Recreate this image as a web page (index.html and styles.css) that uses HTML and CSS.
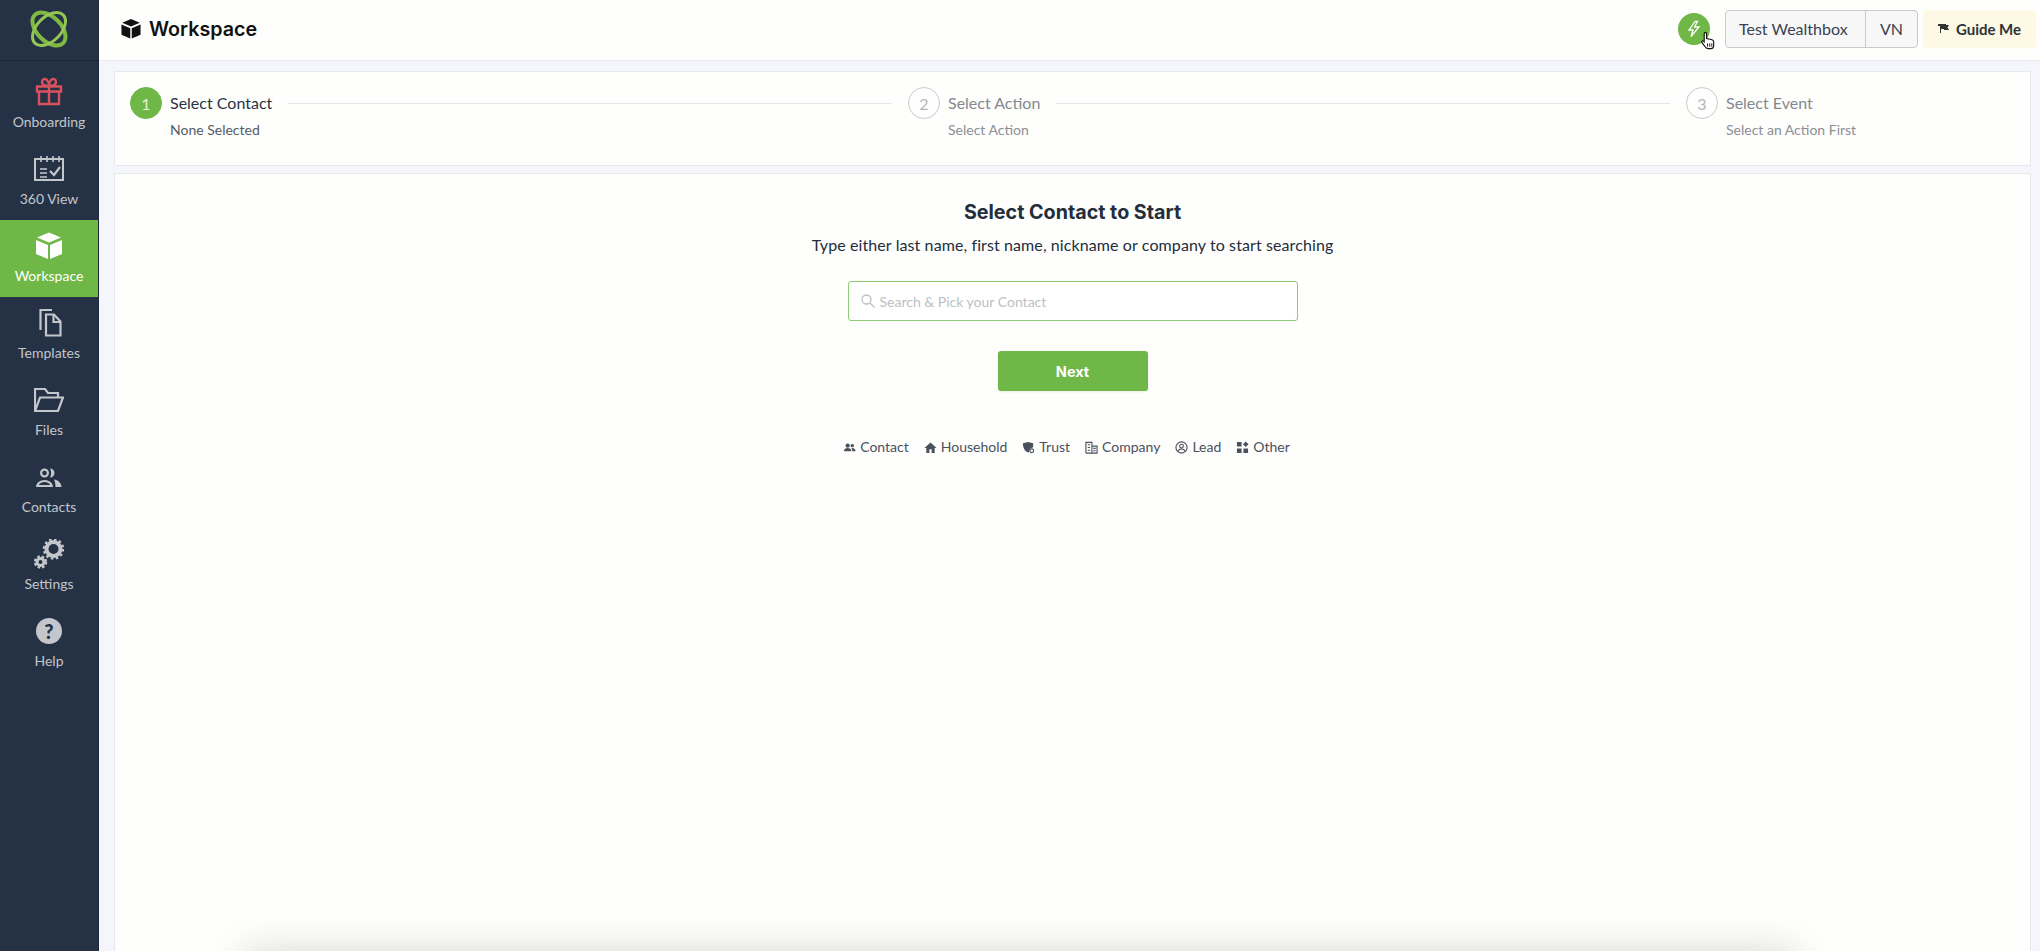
FILE: index.html
```html
<!DOCTYPE html>
<html lang="en">
<head>
  <meta charset="UTF-8" />
  <meta name="viewport" content="width=device-width, initial-scale=1.0" />
  <title>Workspace</title>
  <link rel="stylesheet" href="styles.css">
</head>
<body>
  <div class="app">
    <!-- sidebar -->
    <aside class="sidebar">
      <div class="logo">
        <svg width="38" height="38" viewBox="0 0 38 38" fill="none" stroke="#7fb843" stroke-width="4">
          <ellipse cx="19" cy="19" rx="20" ry="12" transform="rotate(45 19 19)"/>
          <ellipse cx="19" cy="19" rx="20" ry="12" transform="rotate(-45 19 19)" stroke="#93c653" stroke-width="3"/>
        </svg>
      </div>
      <nav>
        <a class="nav-item">
          <svg class="nav-icon" viewBox="0 0 30 30" fill="none" stroke="#d9515f" stroke-width="2.400">
            <path d="M3 9.500h24v5H3zM5 14.500V27h20V14.500M15 9.500V27"/>
            <path d="M15 9c-3 0-7-1-7-4s3-4 5-2 2 6 2 6zM15 9c3 0 7-1 7-4s-3-4-5-2-2 6-2 6z"/>
          </svg>
          <span>Onboarding</span>
        </a>
        <a class="nav-item">
          <svg class="nav-icon" viewBox="0 0 30 30" fill="none" stroke="#c3c6cb" stroke-width="2">
            <path d="M1 5h28v21H1z"/>
            <path d="M7 2v6M13 2v6M19 2v6M25 2v6" stroke-width="1.600"/>
            <path d="M6 15h7M6 19h7M6 23h7" stroke-width="1.700"/>
            <path d="M16 17l4 4 6-8" stroke-width="2.200"/>
          </svg>
          <span>360 View</span>
        </a>
        <a class="nav-item active">
          <svg class="nav-icon" viewBox="0 0 30 30" fill="#fff">
            <path d="M15 1.500l12 5-12 5-12-5z"/>
            <path d="M2 9l12 5v14L2 23z"/>
            <path d="M28 9l-12 5v14l12-5z"/>
          </svg>
          <span>Workspace</span>
        </a>
        <a class="nav-item">
          <svg class="nav-icon" viewBox="0 0 30 30" fill="none" stroke="#c3c6cb" stroke-width="2.200">
            <path d="M12 6.500h8l6.500 7V27.500H12z"/>
            <path d="M19.500 6.500v7.500h7"/>
            <path d="M18 2H6.500v20"/>
          </svg>
          <span>Templates</span>
        </a>
        <a class="nav-item">
          <svg class="nav-icon" viewBox="0 0 30 30" fill="none" stroke="#c3c6cb" stroke-width="2.200">
            <path d="M1 26V4h10l3 4h10v4"/>
            <path d="M1 26h23l5-13.500H6z"/>
          </svg>
          <span>Files</span>
        </a>
        <a class="nav-item">
          <svg class="nav-icon" viewBox="0 0 30 30" fill="#c3c6cb">
            <path fill-rule="evenodd" d="M10.500 6.500a4.500 4.500 0 1 1 0 9 4.500 4.500 0 0 1 0-9zm0 2.200a2.300 2.300 0 1 0 0 4.600 2.300 2.300 0 0 0 0-4.600z"/>
            <path d="M16 6.500a4.500 4.500 0 0 1 0 9c1.500-2.500 1.500-6.500 0-9z"/>
            <path fill-rule="evenodd" d="M2 25c0-4 4-7 8.500-7s8.500 3 8.500 7zm2.800-2h11.400c-1-1.800-3.500-3-5.700-3s-4.700 1.200-5.700 3z"/>
            <path d="M20 17.500c4 .5 7.500 3.500 7.500 7.500h-6c0-3-.5-5.500-1.500-7.500z"/>
          </svg>
          <span>Contacts</span>
        </a>
        <a class="nav-item">
          <svg class="nav-icon" viewBox="0 0 30 30" fill="none" stroke="#c3c6cb">
            <circle cx="19.500" cy="10" r="7" stroke-width="4"/>
            <circle cx="19.500" cy="10" r="9.500" stroke-width="2.500" stroke-dasharray="2.500 2.500"/>
            <circle cx="6.500" cy="23" r="3.500" stroke-width="3"/>
            <circle cx="6.500" cy="23" r="5.500" stroke-width="2.500" stroke-dasharray="2.500 1.900"/>
          </svg>
          <span>Settings</span>
        </a>
        <a class="nav-item">
          <div class="help-icon">?</div>
          <span>Help</span>
        </a>
      </nav>
    </aside>

    <div class="main">
      <!-- top bar -->
      <header class="topbar">
        <div class="page-title">
          <svg width="22" height="22" viewBox="0 0 30 30" fill="#111">
            <path d="M15 1.500l12 5-12 5-12-5z"/>
            <path d="M2 9l12 5v14L2 23z"/>
            <path d="M28 9l-12 5v14l12-5z"/>
          </svg>
          Workspace
        </div>
        <div class="top-actions">
          <div class="bolt">
            <svg width="16" height="18" viewBox="0 0 16 18" fill="none" stroke="#fff" stroke-width="1.300">
              <path d="M9 1.500L3 10h4l-2 6.500L13 7H8.500l3-5.500z"/>
            </svg>
            <svg class="cursor" width="16" height="19" viewBox="0 0 16 20">
              <path d="M5 1.500c1 0 1.500.6 1.500 1.500v5l5 1c1.500.4 2.500 1 2.500 2.500V15c0 2-1 3.500-3 3.500H8c-1.500 0-2.500-1-3.500-2.500L1.500 12c-.7-1 .6-2.300 1.700-1.300l.8.800V3c0-1 .5-1.500 1-1.500z" fill="#fff" stroke="#111" stroke-width="1.200"/>
              <path d="M7.500 13v3.500M9.800 13v3.500M12 13v3.500" stroke="#111" stroke-width="1"/>
            </svg>
          </div>
          <div class="account">
            <span class="account-name">Test Wealthbox</span>
            <span class="account-initials">VN</span>
          </div>
          <div class="guide">
            <svg width="12" height="11" viewBox="0 0 12 11" fill="#333"><path d="M0 1h8v1h3L9.500 4.500 11 7H6V6H3v4H2V3H0z"/></svg>
            Guide Me
          </div>
        </div>
      </header>

      <div class="page-body">
        <!-- stepper -->
        <section class="steps-card">
          <div class="step current">
            <div class="step-row">
              <div class="step-num">1</div>
              <div class="step-label">Select Contact</div>
              <div class="step-line"></div>
            </div>
            <div class="step-sub">None Selected</div>
          </div>
          <div class="step">
            <div class="step-row">
              <div class="step-num">2</div>
              <div class="step-label">Select Action</div>
              <div class="step-line"></div>
            </div>
            <div class="step-sub">Select Action</div>
          </div>
          <div class="step last">
            <div class="step-row">
              <div class="step-num">3</div>
              <div class="step-label">Select Event</div>
            </div>
            <div class="step-sub">Select an Action First</div>
          </div>
        </section>

        <!-- contact search -->
        <section class="content-card">
          <h1>Select Contact to Start</h1>
          <p class="hint">Type either last name, first name, nickname or company to start searching</p>
          <div class="search">
            <svg width="14" height="14" viewBox="0 0 14 14" fill="none" stroke="#bcbfc4" stroke-width="1.300">
              <circle cx="5.500" cy="5.500" r="4.500"/>
              <path d="M9 9l4.500 4.500"/>
            </svg>
            <span>Search &amp; Pick your Contact</span>
          </div>
          <button class="next-btn">Next</button>
          <ul class="legend">
            <li>
              <svg viewBox="0 0 14 14" fill="#4a515c"><circle cx="5" cy="5" r="2.300"/><circle cx="10" cy="5" r="1.800"/><path d="M1 11c0-2.500 2-3.500 4-3.500S9 8.500 9 11zM10 11c0-1.500-.4-2.500-1-3.300 2-.4 4.500.6 4.500 3.300z"/></svg>
              Contact
            </li>
            <li>
              <svg viewBox="0 0 14 14" fill="#4a515c"><path d="M7 1.500L.5 7.500h2V13h3.300V9h2.400v4h3.300V7.500h2z"/></svg>
              Household
            </li>
            <li>
              <svg viewBox="0 0 14 14" fill="#4a515c"><path d="M1 2.500L6.500 1 12 2.500V7C10 7 7.500 8.500 7.500 12.500 4 12 1 9 1 2.500z"/><circle cx="10.500" cy="10.500" r="2" fill="none" stroke="#4a515c" stroke-width="1.200"/></svg>
              Trust
            </li>
            <li>
              <svg viewBox="0 0 14 14" fill="none" stroke="#4a515c" stroke-width="1.200"><path d="M1 13V1.500h6.500V13M7.500 5.500H13V13H1"/><path d="M3 4h2.500M3 7h2.500M3 10h2.500M9 8h2.500M9 10.500h2.500"/></svg>
              Company
            </li>
            <li>
              <svg viewBox="0 0 14 14" fill="none" stroke="#4a515c" stroke-width="1.200"><circle cx="7" cy="7" r="6"/><circle cx="7" cy="5.500" r="2"/><path d="M3 11c1-2 2.500-2.500 4-2.500s3 .5 4 2.500"/></svg>
              Lead
            </li>
            <li>
              <svg viewBox="0 0 14 14" fill="#4a515c"><path d="M1 1h5v5H1zM1 8h5v5H1zM8 8h5v5H8z"/><path d="M10.500.5L13.500 3.500 10.500 6.500 7.500 3.500z"/></svg>
              Other
            </li>
          </ul>
        </section>
      </div>
    </div>

    <!-- shadow of a panel sitting just under the fold -->
    <div class="fold-panel"></div>
  </div>
</body>
</html>
```

FILE: styles.css
```css
* {
  box-sizing: border-box;
}

body {
  margin: 0;
  height: 100vh;
  overflow: hidden;
  font-family: Lato, 'Liberation Sans', sans-serif;
  color: #232d3b;
  background-color: #f5f6fb;
}

.app {
  position: relative;
  display: flex;
  height: 100vh;
  overflow: hidden;
}

/* sidebar */
.sidebar {
  flex: 0 0 99px;
  background-color: #253245;
  border-right: 1px solid #1e2a3b;
}

.logo {
  height: 61px;
  padding-bottom: 2px;
  display: flex;
  align-items: center;
  justify-content: center;
  border-bottom: 1px solid #1a2535;
}

.logo svg {
  overflow: visible;
}

nav {
  padding-top: 5px;
}

.nav-item {
  height: 77px;
  display: flex;
  flex-direction: column;
  align-items: center;
  padding-top: 11px;
  gap: 6px;
  font-size: 14px;
  line-height: 17px;
  color: #c3c6cb;
}

.nav-item.active {
  background-color: #6fb747;
  color: #fff;
}

.nav-icon {
  width: 30px;
  height: 30px;
  flex: none;
}

.help-icon {
  width: 26px;
  height: 26px;
  margin: 2px 0;
  border-radius: 50%;
  background-color: #c3c6cb;
  color: #253245;
  font-size: 20px;
  font-weight: 900;
  line-height: 26px;
  text-align: center;
}

/* main column */
.main {
  flex: 1;
  min-width: 0;
  display: flex;
  flex-direction: column;
}

.topbar {
  height: 61px;
  flex: none;
  display: flex;
  align-items: center;
  justify-content: space-between;
  padding: 0 4px 3px 21px;
  background-color: #fefefd;
  border-bottom: 1px solid #e9ebf2;
}

.page-title {
  display: flex;
  align-items: center;
  gap: 7px;
  font-family: Inter, 'Liberation Sans', sans-serif;
  font-size: 19.700px;
  font-weight: 600;
  color: #111;
}

.top-actions {
  display: flex;
  align-items: center;
}

.bolt {
  position: relative;
  width: 32px;
  height: 32px;
  margin-right: 15px;
  display: flex;
  align-items: center;
  justify-content: center;
  border-radius: 50%;
  background-color: #6fb747;
}

.cursor {
  position: absolute;
  left: 22px;
  top: 18px;
}

.account {
  display: flex;
  height: 38px;
  font-size: 16px;
  color: #3a4250;
  background-color: #f7f7f7;
  border: 1px solid #c9cbcf;
  border-radius: 4px;
}

.account span {
  display: flex;
  align-items: center;
}

.account-name {
  width: 140px;
  padding-left: 13px;
  border-right: 1px solid #c9cbcf;
}

.account-initials {
  width: 51px;
  justify-content: center;
}

.guide {
  height: 38px;
  width: 113px;
  margin-left: 5px;
  display: flex;
  align-items: center;
  justify-content: center;
  gap: 6px;
  font-size: 15px;
  font-weight: 700;
  color: #2c323b;
  background-color: #fdf9e4;
  border-radius: 4px;
}

/* cards */
.page-body {
  flex: 1;
  min-height: 0;
  display: flex;
  flex-direction: column;
  gap: 7px;
  padding: 10px 9px 0 15px;
}

.steps-card {
  height: 95px;
  flex: none;
  display: flex;
  padding: 15px 0 0 15px;
  background-color: #fefefd;
  border: 1px solid #e8e9ee;
}

.step {
  flex: 0 0 778px;
}

.step.last {
  flex: 1;
}

.step-row {
  display: flex;
  align-items: center;
  gap: 8px;
}

.step-num {
  width: 32px;
  height: 32px;
  flex: none;
  display: flex;
  align-items: center;
  justify-content: center;
  font-size: 16px;
  color: #b5b7bb;
  border: 1px solid #c8cacd;
  border-radius: 50%;
}

.step-label {
  padding-bottom: 2px;
  font-size: 16px;
  color: #85888e;
}

.step-line {
  flex: 1;
  height: 1px;
  margin: 0 16px 0 8px;
  background-color: #e6e7ee;
}

.step-sub {
  margin: 2px 0 0 40px;
  font-size: 14px;
  line-height: 17px;
  color: #8c8f94;
}

.step.current .step-num {
  color: #e8f3df;
  background-color: #6fb747;
  border-color: #6fb747;
}

.step.current .step-label {
  color: #2b3340;
}

.step.current .step-sub {
  color: #555b64;
}

.content-card {
  flex: 1;
  display: flex;
  flex-direction: column;
  align-items: center;
  padding-top: 25px;
  background-color: #fefefd;
  border: 1px solid #e8e9ee;
  border-bottom: none;
}

h1 {
  margin: 0;
  font-family: Inter, 'Liberation Sans', sans-serif;
  font-size: 19.700px;
  font-weight: 700;
  line-height: 26px;
  color: #232d3b;
}

.hint {
  margin: 10px 0 0;
  font-size: 16px;
  line-height: 20px;
  letter-spacing: 0.1px;
}

.search {
  width: 450px;
  height: 40px;
  margin-top: 26px;
  padding-left: 12px;
  display: flex;
  align-items: center;
  gap: 5px;
  font-size: 14px;
  color: #bcbfc4;
  background-color: #fff;
  border: 1px solid #8fcb74;
  border-radius: 3px;
}

.next-btn {
  width: 150px;
  height: 40px;
  margin-top: 30px;
  font-family: Inter, 'Liberation Sans', sans-serif;
  font-size: 14.500px;
  font-weight: 700;
  color: #fff;
  background-color: #6fb747;
  border: none;
  border-radius: 3px;
  box-shadow: 0 1px 2px rgba(0, 0, 0, 0.08);
}

.legend {
  margin: 47px 0 0;
  padding: 0 12px 0 0;
  list-style: none;
  display: flex;
  gap: 15px;
  font-size: 14px;
  line-height: 18px;
  color: #4a515c;
}

.legend li {
  display: flex;
  align-items: center;
  gap: 4px;
}

.legend svg {
  width: 13px;
  height: 13px;
}

/* only its shadow shows, the panel itself is below the window */
.fold-panel {
  position: absolute;
  left: 250px;
  top: 960px;
  width: 1540px;
  height: 60px;
  background-color: #fff;
  box-shadow: 0 0 40px 6px rgba(0, 0, 0, 0.18);
}
```
